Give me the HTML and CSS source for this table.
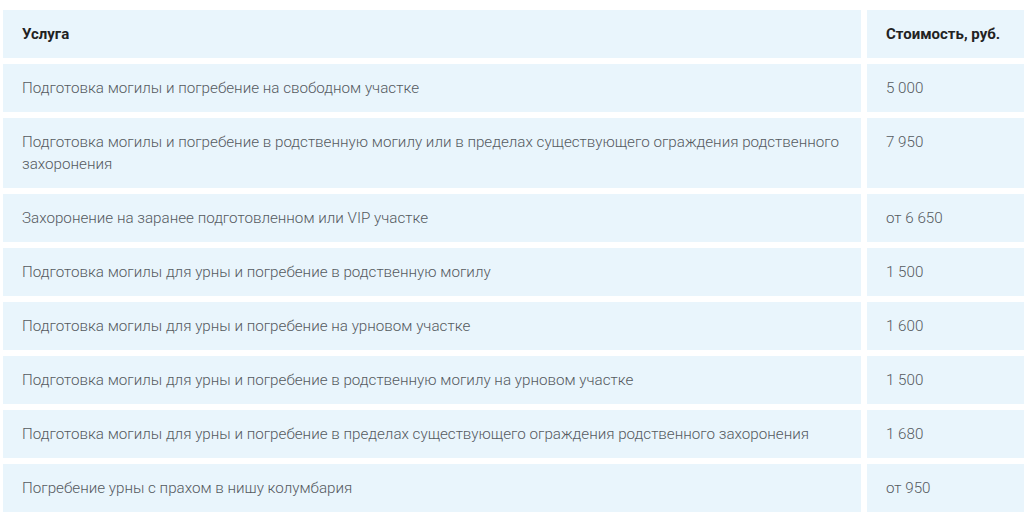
FILE: index.html
```html
<!DOCTYPE html>
<html lang="ru">
<head>
<meta charset="utf-8">
<link rel="stylesheet" href="styles.css">
</head>
<body>
<table class="prices">
  <colgroup><col class="c-name"><col class="c-price"></colgroup>
  <thead>
    <tr><th>Услуга</th><th>Стоимость, руб.</th></tr>
  </thead>
  <tbody>
    <tr><td>Подготовка могилы и погребение на свободном участке</td><td>5 000</td></tr>
    <tr><td>Подготовка могилы и погребение в родственную могилу или в пределах существующего ограждения родственного захоронения</td><td>7 950</td></tr>
    <tr><td>Захоронение на заранее подготовленном или VIP участке</td><td>от 6 650</td></tr>
    <tr><td>Подготовка могилы для урны и погребение в родственную могилу</td><td>1 500</td></tr>
    <tr><td>Подготовка могилы для урны и погребение на урновом участке</td><td>1 600</td></tr>
    <tr><td>Подготовка могилы для урны и погребение в родственную могилу на урновом участке</td><td>1 500</td></tr>
    <tr><td>Подготовка могилы для урны и погребение в пределах существующего ограждения родственного захоронения</td><td>1 680</td></tr>
    <tr><td>Погребение урны с прахом в нишу колумбария</td><td>от 950</td></tr>
  </tbody>
</table>
</body>
</html>
```
FILE: styles.css
```css
html, body {
  margin: 0;
  padding: 0;
  background: #ffffff;
  overflow: hidden;
}
body {
  font-family: Roboto, "Liberation Sans", sans-serif;
  font-size: 15.2px;
  font-weight: 300;
  line-height: 22px;
  color: #555a5f;
}
.prices {
  table-layout: fixed;
  width: 1040px;
  margin: 4px 0 0 -3px;
  border-collapse: separate;
  border-spacing: 6px;
}
.c-name { width: 858px; }
.prices th,
.prices td {
  background: #e9f5fc;
  padding: 13px 20px 13px 19px;
  text-align: left;
  vertical-align: top;
}
.prices th {
  font-size: 15px;
  font-weight: 700;
  color: #222222;
}
```
